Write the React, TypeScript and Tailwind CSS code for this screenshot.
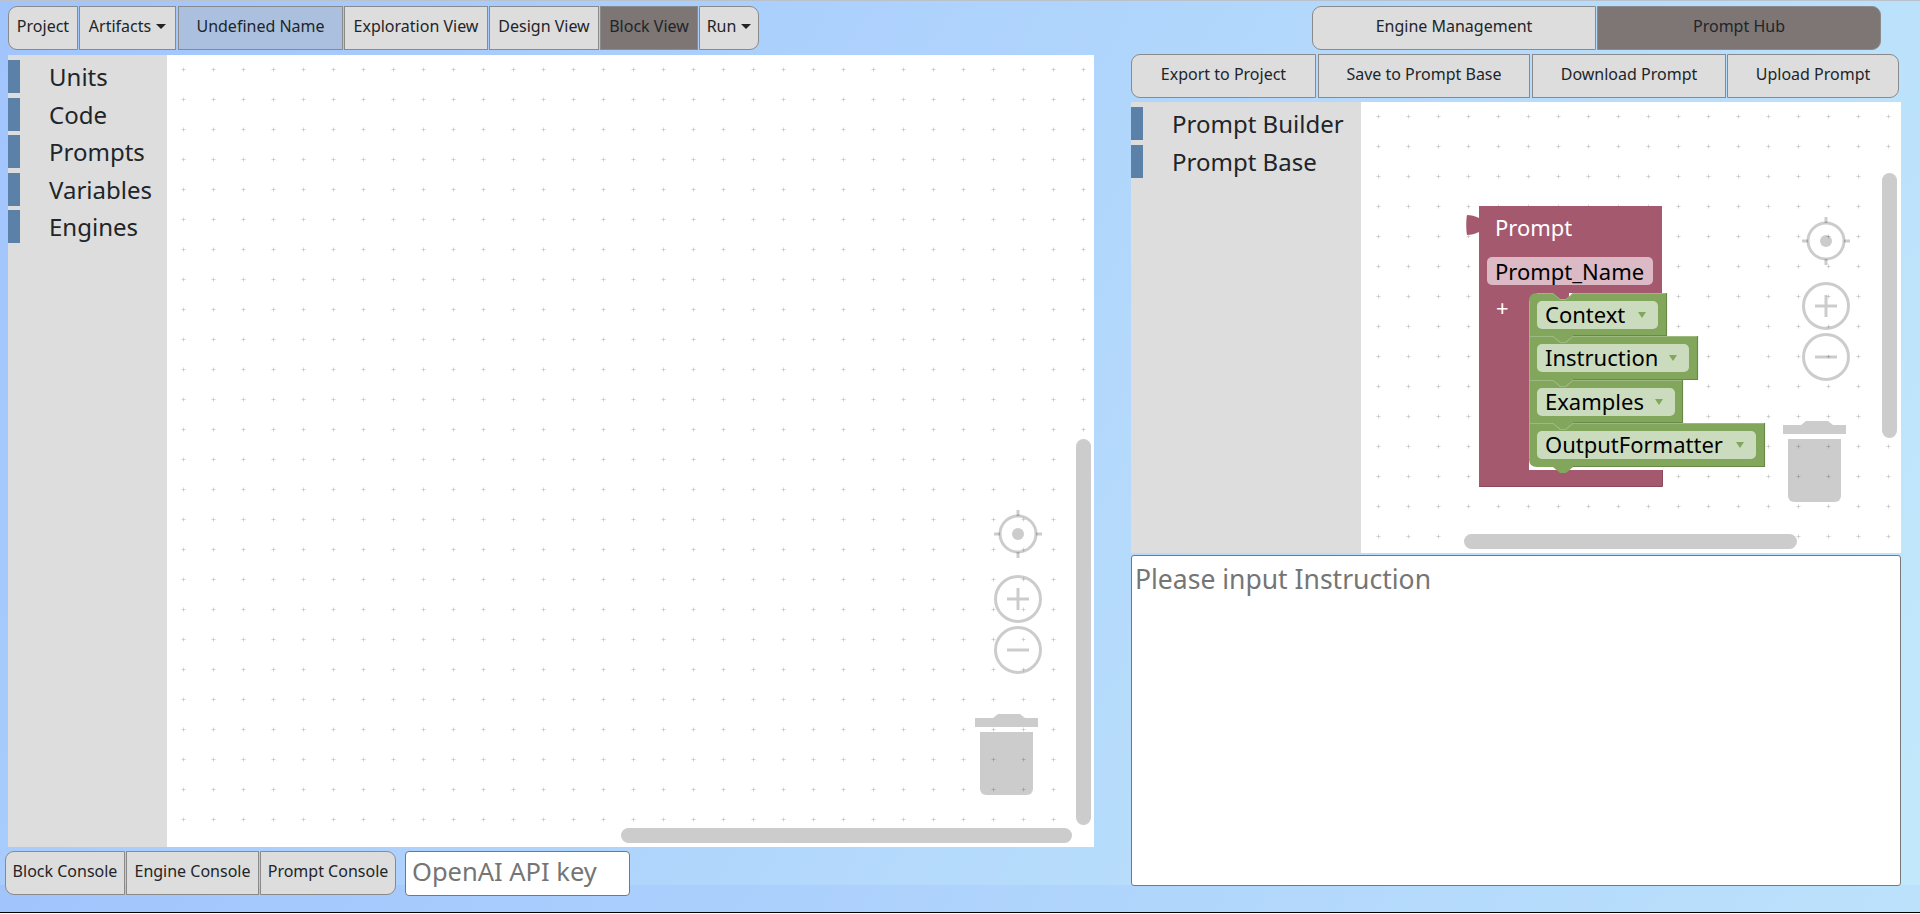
import React from "react";

const font = { fontFamily: '"Noto Sans", sans-serif' };

function Caret() {
  return <span className="ml-[5px] inline-block border-x-[5px] border-t-[5px] border-x-transparent border-t-[#222] align-[3px]" />;
}

function NavButton({ label, width, dark, blue, first, last, caret }: { label: string; width: string; dark?: boolean; blue?: boolean; first?: boolean; last?: boolean; caret?: boolean }) {
  return (
    <button
      className={`${width} h-[44px] shrink-0 border border-[#8a8a8a] pb-[4px] text-[16px] text-[#212529] ${dark ? "bg-[#7d7675]" : blue ? "bg-[#abc0de]" : "bg-[#dddddd]"} ${first ? "rounded-l-[9px]" : ""} ${last ? "rounded-r-[9px]" : ""}`}
    >
      {label}
      {caret && <Caret />}
    </button>
  );
}

function Tab({ label }: { label: string }) {
  return (
    <div className="flex h-[33px] items-center">
      <div className="h-full w-[12px] bg-[#5b81a9]" />
      <span className="ml-[29px] pt-[1px] text-[24px] text-[#212529]">{label}</span>
    </div>
  );
}

function Dots({ id, x, y }: { id: string; x: number; y: number }) {
  return (
    <svg className="absolute inset-0 h-full w-full">
      <defs>
        <pattern id={id} x={x} y={y} width="30" height="30" patternUnits="userSpaceOnUse">
          <path d="M0.5 2.5H4.5M2.5 0.5V4.5" stroke="#d6d6d6" strokeWidth="1" />
          <rect x="2" y="2" width="1" height="1" fill="#c4c4c4" />
        </pattern>
      </defs>
      <rect width="100%" height="100%" fill={`url(#${id})`} />
    </svg>
  );
}

// blockly style controls: target, zoom in, zoom out, trash
function Controls({ cx, top }: { cx: number; top: number }) {
  return (
    <svg className="pointer-events-none absolute overflow-visible" style={{ left: cx, top }} width="1" height="1">
      <g fill="none" stroke="#000" strokeOpacity="0.2" strokeWidth="3">
        <circle cx="0" cy="0" r="18" />
        <path d="M0 -24V-18M0 18V24M-24 0H-18M18 0H24" />
        <circle cx="0" cy="65" r="22.5" />
        <path d="M-11 65H11M0 54V76" />
        <circle cx="0" cy="116" r="22.5" />
        <path d="M-11 116H11" />
      </g>
      <circle cx="0" cy="0" r="6" fill="#000" fillOpacity="0.2" />
      <g fill="#000" fillOpacity="0.2">
        <path d="M-43 184H20V193H-43ZM-25 184L-20 180H2L7 184Z" />
        <path d="M-38 198H15V255A6 6 0 0 1 9 261H-32A6 6 0 0 1 -38 255Z" />
      </g>
    </svg>
  );
}

function Scrollbars({ vLeft, vTop, vHeight, hLeft, hTop, hWidth }: { vLeft: number; vTop: number; vHeight: number; hLeft: number; hTop: number; hWidth: number }) {
  return (
    <>
      <div className="absolute w-[15px] rounded-[8px] bg-[#cccccc]" style={{ left: vLeft, top: vTop, height: vHeight }} />
      <div className="absolute h-[15px] rounded-[8px] bg-[#cccccc]" style={{ left: hLeft, top: hTop, width: hWidth }} />
    </>
  );
}

function GreenBlock({ y, h, right, fieldRight, label, tri, first, last }: { y: number; h: number; right: number; fieldRight: number; label: string; tri: number; first?: boolean; last?: boolean }) {
  const b = y + h;
  const top = `H24 L31 ${y + 6} H37 L44 ${y} H${right}`;
  const start = first ? `M0 ${y + 8} Q0 ${y} 8 ${y} ` : `M0 ${y} `;
  const end = last ? `H8 Q0 ${b} 0 ${b - 8}` : `H0`;
  return (
    <g>
      <path d={`${start}${top} V${b} H44 L37 ${b + 6} H31 L24 ${b} ${end} Z`} fill="#82a65c" />
      <path d={`M${right - 0.5} ${y} V${b - 0.5} H44`} fill="none" stroke="#688a47" strokeWidth="1.2" />
      <path d={`M0.5 ${y + (first ? 8 : 0)} V${b - (last ? 8 : 0)}`} fill="none" stroke="#9bb980" strokeWidth="1" />
      <path d={`M${first ? 8 : 0} ${y + 0.5} H24 L31 ${y + 6.5} H37 L44 ${y + 0.5} H${right - 1}`} fill="none" stroke="#9bb980" strokeWidth="1" />
      <rect x="8" y={y + 8} width={fieldRight} height="28" rx="5" fill="#cbdcbe" />
      <text x="16" y={y + 30} fontSize="22" fill="#000">{label}</text>
      <path d={`M${tri - 4} ${y + 19}h8l-4 6z`} fill="#82a65c" />
    </g>
  );
}

function PromptBlocks() {
  return (
    <svg className="absolute left-[338px] top-[100px] overflow-visible" width="310" height="290" viewBox="0 0 310 290" style={font}>
      <g transform="translate(0 4)">
        <path
          d="M10 0H193V87H100V95H60V264H193V280H10V26C6 28 2 29 -2 29C-3 24 -3 14 -2 9C2 9 6 10 10 12Z"
          fill="#a5596e"
        />
        <path d="M10 280.5H193.5V264" fill="none" stroke="#8b4a5c" strokeWidth="1" />
        <text x="26" y="30" fontSize="22" fill="#fff">Prompt</text>
        <rect x="18" y="51" width="166" height="28" rx="5" fill="#dbbac5" />
        <text x="26" y="74" fontSize="22" fill="#000">Prompt_Name</text>
        <text x="27" y="110" fontSize="22" fill="#fff">+</text>
        <g transform="translate(60 -16)">
          <GreenBlock y={103} h={43} right={138} fieldRight={121} label="Context" tri={113} first />
          <GreenBlock y={146} h={44} right={169} fieldRight={152} label="Instruction" tri={144} />
          <GreenBlock y={190} h={43} right={154} fieldRight={138} label="Examples" tri={130} />
          <GreenBlock y={233} h={44} right={236} fieldRight={219} label="OutputFormatter" tri={211} last />
        </g>
      </g>
    </svg>
  );
}

export default function App() {
  return (
    <div className="relative h-[913px] overflow-hidden bg-[linear-gradient(120deg,#a1c4fd_0%,#c2e9fb_100%)] bg-[length:100%_885px] pt-[6px]" style={font}>
      <div className="flex justify-between pl-[8px] pr-[39px]">
        <div className="flex gap-[1px]">
          <NavButton label="Project" width="w-[70px]" first />
          <NavButton label="Artifacts" width="w-[97px]" caret />
          <NavButton label="Undefined Name" width="w-[165px] ml-[1px]" blue />
          <NavButton label="Exploration View" width="w-[144px]" />
          <NavButton label="Design View" width="w-[110px]" />
          <NavButton label="Block View" width="w-[98px]" dark />
          <NavButton label="Run" width="w-[60px]" last caret />
        </div>
        <div className="flex gap-[1px]">
          <NavButton label="Engine Management" width="w-[284px]" first />
          <NavButton label="Prompt Hub" width="w-[284px]" dark last />
        </div>
      </div>

      <div className="flex">
        <div className="ml-[5px] w-[1089px] shrink-0">
          <div className="relative ml-[3px] mt-[5px] h-[792px] w-[1086px] overflow-hidden bg-white">
            <Dots id="left" x={-7} y={12} />
            <div className="absolute inset-y-0 left-0 flex w-[159px] flex-col gap-[4.5px] bg-[#dddddd] pt-[5px]">
              <Tab label="Units" />
              <Tab label="Code" />
              <Tab label="Prompts" />
              <Tab label="Variables" />
              <Tab label="Engines" />
            </div>
            <Controls cx={1010} top={479} />
            <Scrollbars vLeft={1068} vTop={384} vHeight={386} hLeft={613} hTop={773} hWidth={451} />
          </div>
          <div className="mt-[4px] flex items-start">
            <NavButton label="Block Console" width="w-[120px]" first />
            <NavButton label="Engine Console" width="w-[133px] ml-[1px]" />
            <NavButton label="Prompt Console" width="w-[136px] ml-[1px]" last />
            <div className="ml-[9px] flex h-[45px] w-[225px] items-center rounded-[4px] border border-[#777] bg-white pb-[5px] pl-[6px] text-[25.5px] text-[#757575]">
              OpenAI API key
            </div>
          </div>
        </div>

        <div className="ml-[37px] w-[770px] shrink-0">
          <div className="mt-[4px] flex h-[44px] gap-[1px]">
            <NavButton label="Export to Project" width="w-[185px]" first />
            <NavButton label="Save to Prompt Base" width="w-[212px] ml-[1px]" />
            <NavButton label="Download Prompt" width="w-[194px] ml-[1px]" />
            <NavButton label="Upload Prompt" width="w-[172px]" last />
          </div>
          <div className="relative mt-[4px] h-[451px] overflow-hidden bg-white">
            <Dots id="right" x={5} y={12} />
            <div className="absolute inset-y-0 left-0 flex w-[230px] flex-col gap-[5px] bg-[#dddddd] pt-[5px]">
              <Tab label="Prompt Builder" />
              <Tab label="Prompt Base" />
            </div>
            <PromptBlocks />
            <Controls cx={695} top={139} />
            <Scrollbars vLeft={751} vTop={71} vHeight={265} hLeft={333} hTop={432} hWidth={333} />
          </div>
          <div className="mt-[2px] h-[331px] rounded-[3px] border border-[#777] bg-white px-[3px] pt-[4px] text-[26.5px] text-[#757575]">
            Please input Instruction
          </div>
        </div>
      </div>
      <div className="absolute inset-x-0 top-0 h-[1px] bg-[#b9c2cc]" />
      <div className="absolute inset-x-0 bottom-0 h-[1px] bg-black" />
    </div>
  );
}
